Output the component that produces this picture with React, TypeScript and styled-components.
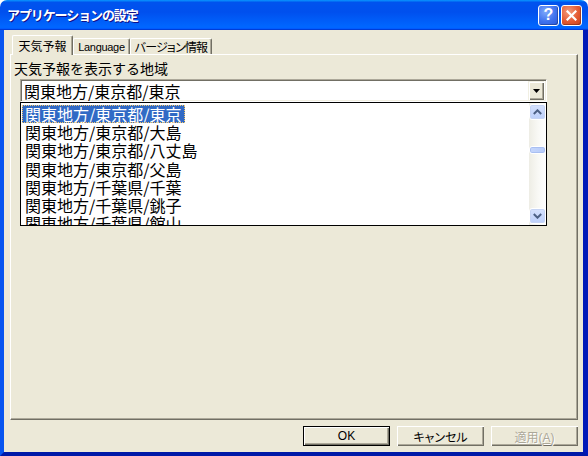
import styled, { createGlobalStyle } from "styled-components";

const GlobalStyle = createGlobalStyle`
    html, body {
        margin: 0;
        padding: 0;
        background: #ffffff;
    }
    body {
        font-family: "Liberation Sans", "Noto Sans CJK JP", sans-serif;
    }
`;

const items = [
    "関東地方/東京都/東京",
    "関東地方/東京都/大島",
    "関東地方/東京都/八丈島",
    "関東地方/東京都/父島",
    "関東地方/千葉県/千葉",
    "関東地方/千葉県/銚子",
    "関東地方/千葉県/館山",
];

export default function App() {
    return (
        <>
            <GlobalStyle />
            <Window>
                <TitleBar>
                    <Title>アプリケーションの設定</Title>
                    <CaptionButton $kind="help">?</CaptionButton>
                    <CaptionButton $kind="close">
                        <svg width="11" height="11" viewBox="0 0 11 11">
                            <path d="M1.5 1.5 L9.5 9.5 M9.5 1.5 L1.5 9.5" stroke="#fff" strokeWidth="2.2" strokeLinecap="square" />
                        </svg>
                    </CaptionButton>
                </TitleBar>

                <Client>
                    <TabRow>
                        <Tab $active $width={61} $size={12} $spacing={0}>天気予報</Tab>
                        <Tab $width={57} $size={11} $spacing={-0.3}>Language</Tab>
                        <Tab $width={82} $size={12} $spacing={-0.8}>バージョン情報</Tab>
                    </TabRow>

                    <Panel>
                        <Label>天気予報を表示する地域</Label>
                        <Combo>
                            <ComboText>関東地方/東京都/東京</ComboText>
                            <DropButton>
                                <svg width="7" height="4" viewBox="0 0 7 4">
                                    <path d="M0 0 H7 L3.5 4 Z" fill="#000" />
                                </svg>
                            </DropButton>
                        </Combo>
                        <ListBox>
                            <Items>
                                {items.map((t, i) => (
                                    <Item key={t}>
                                        <ItemText $selected={i === 0}>{t}</ItemText>
                                    </Item>
                                ))}
                            </Items>
                            <ScrollBar>
                                <Arrow>
                                    <svg width="9" height="6" viewBox="0 0 9 6">
                                        <path d="M0.8 5 L4.5 1.3 L8.2 5" stroke="#4d6185" strokeWidth="2" fill="none" />
                                    </svg>
                                </Arrow>
                                <Track>
                                    <Thumb />
                                </Track>
                                <Arrow>
                                    <svg width="9" height="6" viewBox="0 0 9 6">
                                        <path d="M0.8 1 L4.5 4.7 L8.2 1" stroke="#4d6185" strokeWidth="2" fill="none" />
                                    </svg>
                                </Arrow>
                            </ScrollBar>
                        </ListBox>
                    </Panel>

                    <ButtonRow>
                        <Button $default>OK</Button>
                        <Button>キャンセル</Button>
                        <Button disabled>
                            適用(<u>A</u>)
                        </Button>
                    </ButtonRow>
                </Client>
            </Window>
        </>
    );
}

const Window = styled.div`
    width: 588px;
    height: 456px;
    display: flex;
    flex-direction: column;
`;

const TitleBar = styled.div`
    height: 30px;
    flex: none;
    box-sizing: border-box;
    border-radius: 7px 7px 0 0;
    background: linear-gradient(
        180deg,
        #0997ff,
        #0053ee 8%,
        #0050ee 40%,
        #0066ff 88%,
        #0066ff 93%,
        #005bff 95%,
        #003dd7 96%,
        #003dd7
    );
    display: flex;
    align-items: center;
    gap: 2px;
    padding: 0 6px 0 7px;
`;

const Title = styled.div`
    flex: 1;
    color: #ffffff;
    font-family: "Noto Sans CJK JP", sans-serif;
    font-weight: bold;
    font-size: 13px;
    letter-spacing: -1.1px;
    text-shadow: 1px 1px #0f1089;
    line-height: 16px;
    margin-top: -1px;
`;

const CaptionButton = styled.div<{ $kind: "help" | "close" }>`
    width: 21px;
    height: 21px;
    box-sizing: border-box;
    border: 1px solid #ffffff;
    border-radius: 3px;
    display: flex;
    align-items: center;
    justify-content: center;
    color: #ffffff;
    font-family: "Liberation Sans", sans-serif;
    font-weight: bold;
    font-size: 16px;
    background: ${(p) =>
        p.$kind === "close"
            ? "radial-gradient(circle at 35% 30%, #f39b7c, #e45a32 55%, #c7401c)"
            : "radial-gradient(circle at 35% 30%, #7fa9fb, #3f72ee 55%, #2a57d8)"};
    box-shadow: inset -1px -1px rgba(0, 0, 0, 0.25);
`;

const Client = styled.div`
    flex: 1;
    display: flex;
    flex-direction: column;
    background: #ece9d8;
    border-style: solid;
    border-width: 0 5px 4px 4px;
    border-color: #0831d9 #0019b8 #0019a8 #0855f0;
    padding: 5px 5px 6px 6px;
    font-family: "Liberation Sans", "Noto Sans CJK JP", sans-serif;
`;

const TabRow = styled.div`
    height: 19px;
    display: flex;
    align-items: flex-end;
    padding-left: 2px;
`;

const Tab = styled.div<{ $active?: boolean; $width: number; $size: number; $spacing: number }>`
    width: ${(p) => p.$width}px;
    height: ${(p) => (p.$active ? 20 : 16)}px;
    box-sizing: border-box;
    display: flex;
    align-items: center;
    justify-content: center;
    font-size: ${(p) => p.$size}px;
    letter-spacing: ${(p) => p.$spacing}px;
    white-space: nowrap;
    color: #000;
    background: #ece9d8;
    border-top: 1px solid #ffffff;
    border-left: 1px solid #ffffff;
    border-right: 1px solid #716f64;
    box-shadow: inset -1px 0 #aca899;
    border-radius: 2px 2px 0 0;
    font-feature-settings: "palt";
    position: relative;
    z-index: ${(p) => (p.$active ? 1 : 0)};
    margin-bottom: ${(p) => (p.$active ? -1 : 0)}px;
`;

const Panel = styled.div`
    flex: 1;
    display: flex;
    flex-direction: column;
    align-items: flex-start;
    background: #ece9d8;
    border-top: 1px solid #ffffff;
    border-left: 1px solid #ffffff;
    border-right: 1px solid #716f64;
    border-bottom: 1px solid #716f64;
    box-shadow: inset -1px -1px #aca899;
    padding: 4px 0 0 3px;
`;

const Label = styled.div`
    font-family: "Noto Sans CJK JP", sans-serif;
    font-size: 14px;
    line-height: 18px;
    color: #000;
`;

const Combo = styled.div`
    margin: 2px 0 0 6px;
    width: 527px;
    height: 23px;
    box-sizing: border-box;
    display: flex;
    align-items: center;
    background: #ffffff;
    border-top: 1px solid #aca899;
    border-left: 1px solid #aca899;
    border-right: 1px solid #ffffff;
    border-bottom: 1px solid #ffffff;
    box-shadow: inset 1px 1px #716f64, inset -1px -1px #f1efe2;
    padding: 2px 2px 2px 3px;
`;

const ComboText = styled.div`
    flex: 1;
    font-family: "Noto Sans CJK JP", sans-serif;
    font-size: 16px;
    line-height: 18px;
    color: #000;
`;

const DropButton = styled.div`
    width: 16px;
    height: 19px;
    box-sizing: border-box;
    display: flex;
    align-items: center;
    justify-content: center;
    background: #ece9d8;
    box-shadow: inset 1px 1px #f1efe2, inset 2px 2px #ffffff, inset -1px -1px #716f64, inset -2px -2px #aca899;
`;

const ListBox = styled.div`
    margin-left: 6px;
    width: 527px;
    height: 124px;
    box-sizing: border-box;
    border: 1px solid #000000;
    background: #ffffff;
    display: flex;
`;

const Items = styled.div`
    flex: 1;
    overflow: hidden;
    padding: 2px 0 0 1px;
`;

const Item = styled.div`
    height: 18.2px;
`;

const ItemText = styled.span<{ $selected?: boolean }>`
    display: inline-block;
    font-family: "Noto Sans CJK JP", sans-serif;
    font-size: 16px;
    line-height: 18px;
    padding: 0 3px;
    color: ${(p) => (p.$selected ? "#ffffff" : "#000000")};
    background: ${(p) => (p.$selected ? "#316ac5" : "transparent")};
    outline: ${(p) => (p.$selected ? "1px dotted #f2c66b" : "none")};
    outline-offset: -1px;
`;

const ScrollBar = styled.div`
    width: 17px;
    display: flex;
    flex-direction: column;
    background: linear-gradient(90deg, #eeede5, #f8f8f4 50%, #ffffff);
    padding: 1px 0;
`;

const Arrow = styled.div`
    width: 17px;
    height: 16px;
    box-sizing: border-box;
    display: flex;
    align-items: center;
    justify-content: center;
    border: 1px solid #ffffff;
    border-radius: 3px;
    background: linear-gradient(180deg, #d6e2fd, #bccffa);
    box-shadow: 0 0 0 1px #c6d4f4 inset;
`;

const Track = styled.div`
    flex: 1;
    padding-top: 26px;
`;

const Thumb = styled.div`
    height: 8px;
    border: 1px solid #ffffff;
    border-radius: 3px;
    box-sizing: border-box;
    background: linear-gradient(90deg, #c5d6fc, #b6cbf9);
    box-shadow: 0 0 0 1px #a9bff2 inset;
`;

const ButtonRow = styled.div`
    margin-top: 6px;
    display: flex;
    justify-content: flex-end;
    gap: 7px;
`;

const Button = styled.button<{ $default?: boolean }>`
    width: 87px;
    height: 20px;
    box-sizing: border-box;
    padding: 0;
    margin: 0;
    background: #ece9d8;
    font-family: "Liberation Sans", "Noto Sans CJK JP", sans-serif;
    font-size: 12px;
    font-feature-settings: "palt";
    color: #000;
    border: ${(p) => (p.$default ? "1px solid #000000" : "none")};
    box-shadow: inset 1px 1px #ffffff, inset -1px -1px #716f64, inset -2px -2px #aca899;

    &:disabled {
        color: #aca899;
        text-shadow: 1px 1px #ffffff;
    }
`;
